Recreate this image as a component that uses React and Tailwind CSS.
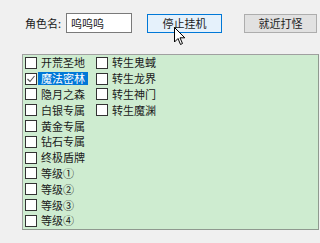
import React from 'react';

const col1 = ['开荒圣地', '魔法密林', '隐月之森', '白银专属', '黄金专属', '钻石专属', '终极盾牌', '等级①', '等级②', '等级③', '等级④'];
const col2 = ['转生鬼蜮', '转生龙界', '转生神门', '转生魔渊'];

function Check({ label, checked, selected }) {
  return (
    <div className="flex h-[15.8px] items-center">
      <div className="flex h-[12px] w-[12px] shrink-0 items-center justify-center border border-[#333333] bg-white">
        {checked && (
          <svg width="10" height="10" viewBox="0 0 10 10">
            <path d="M1.5 5 L4 7.5 L8.5 2" fill="none" stroke="#555555" strokeWidth="1.1" />
          </svg>
        )}
      </div>
      <span
        className={
          selected
            ? 'ml-[1px] flex h-[13px] items-center bg-[#0078d7] px-[3px] text-white'
            : 'ml-[1px] flex h-[13px] items-center px-[3px] text-[#1a1a1a]'
        }
      >
        {label}
      </span>
    </div>
  );
}

export default function App() {
  return (
    <div
      className="relative h-[243px] w-[320px] overflow-hidden bg-[#f0f0f0] text-[11px] leading-none"
      style={{ fontFamily: '"Noto Sans CJK SC", "Noto Sans", sans-serif' }}
    >
      {/* top row */}
      <div className="flex items-center pt-[13px]">
        <span className="ml-[25px] w-[41px] text-[#1a1a1a]">角色名:</span>
        <div className="flex h-[20px] w-[66px] items-center border border-[#7a7a7a] bg-white pl-[4px] text-[#1a1a1a]">
          呜呜呜
        </div>
        <button className="ml-[15px] flex h-[19px] w-[75px] items-center justify-center border border-[#0078d7] bg-[#e5f1fb] text-[#1a1a1a]">
          停止挂机
        </button>
        <button className="ml-[22px] mt-[1px] flex h-[19px] w-[73px] items-center justify-center border border-[#adadad] bg-[#e1e1e1] text-[#1a1a1a]">
          就近打怪
        </button>
      </div>

      {/* list panel */}
      <div className="ml-[22px] mt-[21px] flex h-[176px] w-[297px] border border-[#a0a0a0] border-r-[#8f998f] border-b-[#8f998f] bg-[#ceecd0] pl-[2px]">
        <div className="w-[71px]">
          {col1.map((l, i) => (
            <Check key={l} label={l} checked={i === 1} selected={i === 1} />
          ))}
        </div>
        <div>
          {col2.map((l) => (
            <Check key={l} label={l} />
          ))}
        </div>
      </div>

      {/* mouse cursor */}
      <svg className="absolute left-[174px] top-[27px]" width="12" height="19" viewBox="0 0 12 19">
        <path d="M0.5 0.5 L0.5 15 L4 11.5 L6.5 17.5 L8.5 16.5 L6 10.8 L10.8 10.8 Z" fill="#ffffff" stroke="#000000" strokeWidth="1" strokeLinejoin="round" />
      </svg>
    </div>
  );
}
